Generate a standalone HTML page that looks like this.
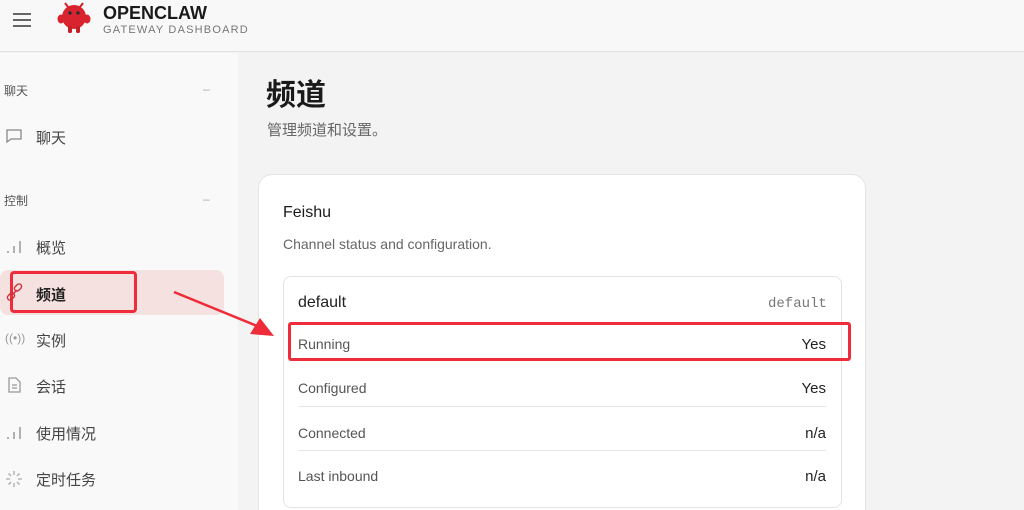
<!DOCTYPE html>
<html style="width:1024px;height:510px;overflow:hidden"><head><meta charset="utf-8"><style>
*{box-sizing:border-box;margin:0;padding:0}
body{width:1024px;height:510px;overflow:hidden;font-family:"Liberation Sans","Noto Sans CJK SC",sans-serif;background:#f3f3f3;position:relative;color:#222}
.hdr{position:absolute;left:0;top:0;width:1024px;height:52px;background:#f8f8f8;border-bottom:1px solid #e2e2e2}
.side{position:absolute;left:0;top:53px;width:238px;height:457px;background:#f9f9f9}
.abs{position:absolute}
.grp{font-size:12px;color:#555}
.item{position:absolute;left:36px;font-size:15px;color:#444}
.ic{position:absolute;left:5px}
.row{position:absolute;left:298px;width:528px;font-size:14px;color:#555;display:flex;justify-content:space-between}
.row span:last-child{color:#222}
.sep{position:absolute;left:298px;width:528px;height:1px;background:#e6e6e6}
</style></head><body>
<div class="hdr"></div>
<div class="abs" style="left:13px;top:13px;width:18px;height:14px;border-top:2px solid #666;border-bottom:2px solid #666"><div style="margin-top:4px;height:2px;background:#666"></div></div>
<svg class="abs" style="left:56px;top:1px" width="36" height="34" viewBox="0 0 36 34"><path d="M12 6 L9 2 M24 6 L27 2" stroke="#d0202a" stroke-width="2"/><circle cx="18" cy="16" r="12" fill="#d9232f"/><ellipse cx="5" cy="18" rx="3.5" ry="4.5" fill="#d9232f"/><ellipse cx="31" cy="18" rx="3.5" ry="4.5" fill="#d9232f"/><rect x="12" y="25" width="4" height="7" rx="1.5" fill="#c81e28"/><rect x="20" y="25" width="4" height="7" rx="1.5" fill="#c81e28"/><circle cx="14" cy="12" r="1.6" fill="#133"/><circle cx="22" cy="12" r="1.6" fill="#133"/></svg>
<div class="abs" style="left:103px;top:3px;font-size:18px;font-weight:bold;color:#1a1a1a">OPENCLAW</div>
<div class="abs" style="left:103px;top:24px;font-size:11px;letter-spacing:1.2px;color:#777">GATEWAY DASHBOARD</div>
<div class="side"></div>
<div class="abs grp" style="left:4px;top:82px">聊天</div><div class="abs" style="left:203px;top:82px;color:#aaa;font-size:12px">–</div>
<svg class="ic" style="top:127px" width="18" height="18" viewBox="0 0 18 18"><path d="M2 3h14v9H6l-4 3z" fill="none" stroke="#888" stroke-width="1.3"/></svg>
<div class="item" style="top:127px">聊天</div>
<div class="abs grp" style="left:4px;top:192px">控制</div><div class="abs" style="left:203px;top:192px;color:#aaa;font-size:12px">–</div>
<svg class="ic" style="top:238px" width="18" height="18"><path d="M3 15v-2M9 15V8M15 15V3" stroke="#999" stroke-width="1.5"/></svg>
<div class="item" style="top:237px">概览</div>
<div class="abs" style="left:0;top:270px;width:224px;height:45px;background:#f6e1e1;border-radius:8px"></div>
<div class="abs" style="left:10px;top:271px;width:127px;height:42px;border:3px solid #ee2c3a;border-radius:4px"></div>
<svg class="ic" style="top:283px" width="20" height="20" viewBox="0 0 20 20"><rect x="9" y="2" width="8" height="5" rx="2.5" transform="rotate(-45 13 4.5)" fill="none" stroke="#d0303a" stroke-width="1.4"/><rect x="2" y="11" width="8" height="5" rx="2.5" transform="rotate(-45 6 13.5)" fill="none" stroke="#d0303a" stroke-width="1.4"/><path d="M7 12l5-5" stroke="#d0303a" stroke-width="1.4"/></svg>
<div class="item" style="top:284px;color:#222;font-weight:bold">频道</div>
<div class="abs" style="left:5px;top:331px;font-size:12px;color:#999">((•))</div>
<div class="item" style="top:330px">实例</div>
<svg class="ic" style="top:376px" width="18" height="18"><path d="M4 2h7l4 4v10H4z M7 9h5M7 12h5" fill="none" stroke="#999" stroke-width="1.3"/></svg>
<div class="item" style="top:376px">会话</div>
<svg class="ic" style="top:424px" width="18" height="18"><path d="M3 15v-2M9 15V8M15 15V3" stroke="#999" stroke-width="1.5"/></svg>
<div class="item" style="top:423px">使用情况</div>
<svg class="ic" style="top:470px" width="18" height="18"><path d="M9 1v4M9 13v4M1 9h4M13 9h4M3.5 3.5l2.5 2.5M12 12l2.5 2.5M3.5 14.5L6 12M12 6l2.5-2.5" stroke="#aaa" stroke-width="1.3"/></svg>
<div class="item" style="top:469px">定时任务</div>
<div class="abs" style="left:266px;top:70px;font-size:30px;font-weight:bold;color:#1a1a1a">频道</div>
<div class="abs" style="left:267px;top:119px;font-size:15px;color:#666">管理频道和设置。</div>
<div class="abs" style="left:258px;top:174px;width:608px;height:336px;background:#fff;border:1px solid #e4e4e4;border-bottom:none;border-radius:14px 14px 0 0"></div>
<div class="abs" style="left:283px;top:204px;font-size:16px;color:#1a1a1a">Feishu</div>
<div class="abs" style="left:283px;top:236px;font-size:14px;color:#666">Channel status and configuration.</div>
<div class="abs" style="left:283px;top:276px;width:559px;height:232px;border:1px solid #e4e4e4;border-radius:8px"></div>
<div class="abs" style="left:298px;top:294px;font-size:16px;color:#222">default</div>
<div class="abs" style="left:768px;top:296px;font-size:14px;color:#777;font-family:'Liberation Mono',monospace">default</div>
<div class="row" style="top:336px;font-size:14px"><span>Running</span><span style="font-size:15px">Yes</span></div>
<div class="abs" style="left:288px;top:322px;width:563px;height:39px;border:3px solid #ee2c3a;border-radius:3px"></div>
<div class="row" style="top:380px"><span>Configured</span><span style="font-size:15px">Yes</span></div>
<div class="sep" style="top:406px"></div>
<div class="row" style="top:425px"><span>Connected</span><span style="font-size:15px">n/a</span></div>
<div class="sep" style="top:450px"></div>
<div class="row" style="top:468px"><span>Last inbound</span><span style="font-size:15px">n/a</span></div>
<svg class="abs" style="left:170px;top:288px" width="110" height="55"><path d="M4 4 L92 40" stroke="#ee2c3a" stroke-width="2.5"/><path d="M104 48 L80 46 L90 30 Z" fill="#ee2c3a"/></svg>
</body></html>
